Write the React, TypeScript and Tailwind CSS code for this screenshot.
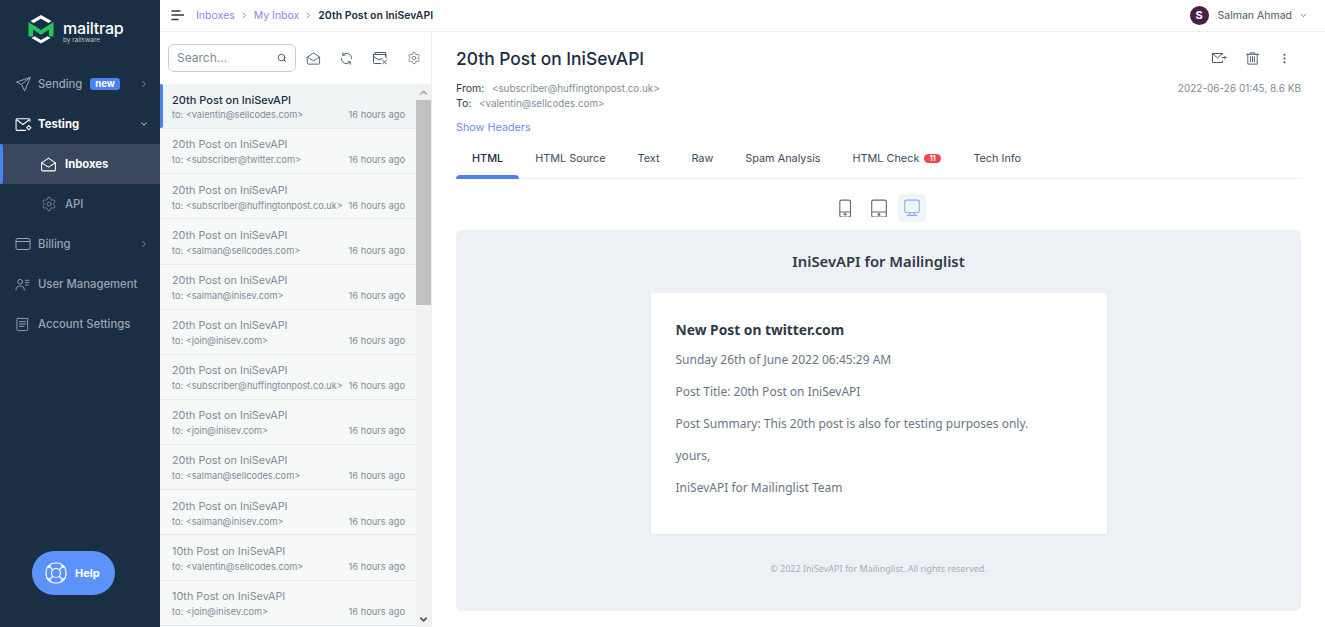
import React from 'react';
import { ChevronRight, ChevronDown, Search, Settings, EllipsisVertical, ChevronUp } from 'lucide-react';

const font = "font-['Inter','Noto_Sans',sans-serif]";

const messages = [
  ['20th Post on IniSevAPI', 'to: <valentin@sellcodes.com>'],
  ['20th Post on IniSevAPI', 'to: <subscriber@twitter.com>'],
  ['20th Post on IniSevAPI', 'to: <subscriber@huffingtonpost.co.uk>'],
  ['20th Post on IniSevAPI', 'to: <salman@sellcodes.com>'],
  ['20th Post on IniSevAPI', 'to: <salman@inisev.com>'],
  ['20th Post on IniSevAPI', 'to: <join@inisev.com>'],
  ['20th Post on IniSevAPI', 'to: <subscriber@huffingtonpost.co.uk>'],
  ['20th Post on IniSevAPI', 'to: <join@inisev.com>'],
  ['20th Post on IniSevAPI', 'to: <salman@sellcodes.com>'],
  ['20th Post on IniSevAPI', 'to: <salman@inisev.com>'],
  ['10th Post on IniSevAPI', 'to: <valentin@sellcodes.com>'],
  ['10th Post on IniSevAPI', 'to: <join@inisev.com>'],
];

const tabs = ['HTML', 'HTML Source', 'Text', 'Raw', 'Spam Analysis', 'HTML Check', 'Tech Info'];

function Logo() {
  return (
    <svg width="26" height="29" viewBox="0 0 26 29" fill="none">
      <path d="M13 0 L23.500 6 L20.500 8 L13 3.700 L5.500 8 L2.500 6 Z" fill="#fff" />
      <path d="M0.500 7 L13 15 L25.500 7 V21.500 L21 21.500 V14.500 L13 19.700 L5 14.500 V21.500 L0.500 21.500 Z" fill="#22c55e" />
      <path d="M3.500 23 L13 28.500 L22.500 23 L19.500 21.300 L13 25 L6.500 21.300 Z" fill="#fff" />
    </svg>
  );
}

function Ico({ children, size = 16, className = '' }: { children: React.ReactNode; size?: number; className?: string }) {
  return (
    <svg width={size} height={size} viewBox="0 0 16 16" fill="none" stroke="currentColor" strokeWidth="1" strokeLinecap="round" strokeLinejoin="round" className={className}>
      {children}
    </svg>
  );
}

const OpenMail = () => (
  <>
    <path d="M1.5 6.5 8 2l6.5 4.5V13a1 1 0 0 1-1 1h-11a1 1 0 0 1-1-1z" />
    <path d="M1.5 6.5 8 10.500l6.500-4" />
  </>
);

function NavItem({ icon, label, bold, arrow, badge }: { icon: React.ReactNode; label: string; bold?: boolean; arrow?: 'right' | 'down'; badge?: boolean }) {
  return (
    <div className={`flex h-10 items-center pl-[15px] pr-[11px] text-[11.300px] ${bold ? 'font-bold text-white' : 'font-medium text-[#9aa5b1]'}`}>
      <span className="flex w-[23px] shrink-0 justify-start">{icon}</span>
      <span>{label}</span>
      {badge && <span className="ml-[8px] rounded-[3px] bg-[#4c82f0] px-[5px] text-[9.500px] font-bold leading-[12px] text-white">new</span>}
      {arrow === 'right' && <ChevronRight size={10} className="ml-auto" />}
      {arrow === 'down' && <ChevronDown size={10} className="ml-auto" />}
    </div>
  );
}

function Sidebar() {
  return (
    <aside className="flex h-[627px] w-[160px] shrink-0 flex-col bg-[#1a2e44]">
      <div className="flex h-[63px] items-start gap-[9px] pl-[28px] pt-[15px]">
        <Logo />
        <div className="flex flex-col pt-[5px] text-white">
          <span className="text-[16px] font-medium leading-[16px] tracking-[-0.2px]">mailtrap</span>
          <span className="text-[6.500px] leading-[8px] text-[#b8c2cc]">by railsware</span>
        </div>
      </div>
      <div className="h-[1px]" />
      <NavItem
        label="Sending"
        badge
        arrow="right"
        icon={<Ico size={16}><path d="M15 1.5 1.5 6l5 2.500L9.500 14.500z" /><path d="M15 1.500 6.500 8.500" /></Ico>}
      />
      <NavItem
        label="Testing"
        bold
        arrow="down"
        icon={<Ico size={17}><path d="M14 5V3.500a1 1 0 0 0-1-1H2a1 1 0 0 0-1 1v9a1 1 0 0 0 1 1h8" /><path d="m1.500 3.500 6 4.500 6-4.500" /><path d="m13 9 2 2-2 2-2-2z" /></Ico>}
      />
      <div className="relative flex h-10 items-center bg-[#3b475e] pl-[40px] text-[11.300px] font-bold text-white">
        <span className="absolute left-0 top-0 h-full w-[3px] rounded-r-[2px] bg-[#4c82f0]" />
        <Ico size={17}><OpenMail /></Ico>
        <span className="ml-[8px]">Inboxes</span>
      </div>
      <div className="flex h-10 items-center pl-[41px] text-[11.300px] font-medium text-[#9aa5b1]">
        <Settings size={16} strokeWidth={1} />
        <span className="ml-[8px]">API</span>
      </div>
      <NavItem
        label="Billing"
        arrow="right"
        icon={<Ico size={16}><rect x="1" y="2.500" width="14" height="11" rx="1.500" /><path d="M1 5.500h14" /></Ico>}
      />
      <NavItem
        label="User Management"
        icon={<Ico size={15}><circle cx="5.500" cy="5" r="2.500" /><path d="M1 14c0-3 2-4.500 4.500-4.500S10 11 10 14" /><path d="M11 3.500h4M11 6h4M11 8.500h3" /></Ico>}
      />
      <NavItem
        label="Account Settings"
        icon={<Ico size={15}><path d="M3 1.500h10.500V13a1.500 1.500 0 0 1-1.500 1.500H3.500A1.500 1.500 0 0 1 2 13V2.500a1 1 0 0 1 1-1z" /><path d="M4.500 5h7M4.500 7.500h7M4.500 10h5" /></Ico>}
      />
      <div className="mt-auto mb-[32px] ml-[32px] flex h-[44px] w-[83px] items-center gap-[7px] rounded-full bg-[#5b93fb] pl-[12px] text-[11px] font-bold text-white">
        <svg width="24" height="24" viewBox="0 0 24 24" fill="none" stroke="currentColor" strokeWidth="1.200">
          <rect x="2" y="2" width="20" height="20" rx="9" />
          <circle cx="12" cy="12" r="4.500" />
          <path d="m5 5 4 4M19 5l-4 4M5 19l4-4M19 19l-4-4M7 3.500l-3.500 3.500M17 3.500 20.500 7M7 20.500 3.500 17M17 20.500l3.500-3.500" />
        </svg>
        Help
      </div>
    </aside>
  );
}

function TopBar() {
  return (
    <header className="flex h-[32px] shrink-0 items-center border-b border-[#eceef0] bg-white pl-[11px] pr-[17px] text-[10.500px]">
      <svg width="13" height="11" viewBox="0 0 13 11" fill="none" stroke="#2b3a4e" strokeWidth="1.400" strokeLinecap="round">
        <path d="M1 1h8M1 5h12M1 9.500h6" />
      </svg>
      <span className="ml-[12px] text-[#8b86ea]">Inboxes</span>
      <ChevronRight size={9} className="mx-[5px] text-[#5d6b7c]" />
      <span className="text-[#8b86ea]">My Inbox</span>
      <ChevronRight size={9} className="mx-[5px] text-[#5d6b7c]" />
      <span className="font-semibold text-[#1a2e44]">20th Post on IniSevAPI</span>
      <div className="ml-auto flex items-center text-[#4b5c70]">
        <span className="flex h-[19px] w-[19px] items-center justify-center rounded-full bg-[#4a1e4b] text-[11px] font-bold text-white">S</span>
        <span className="ml-[9px]">Salman Ahmad</span>
        <ChevronDown size={9} className="ml-[7px]" />
      </div>
    </header>
  );
}

function MessageList() {
  return (
    <section className="flex w-[272px] shrink-0 flex-col border-r border-[#eceef0]">
      <div className="flex h-[52px] shrink-0 items-center pl-[8px] text-[#4b5c70]">
        <div className="flex h-[28px] w-[128px] items-center justify-between rounded-[6px] border border-[#c9ced4] pl-[8px] pr-[8px] text-[12px] text-[#7d8a99]">
          <span>Search...</span>
          <Search size={10} className="text-[#2b3a4e]" />
        </div>
        <span className="ml-[10px] flex"><Ico size={15}><OpenMail /></Ico></span>
        <span className="ml-[18px] flex">
          <Ico size={15}><path d="M13.500 8a5.500 5.500 0 0 0-9.500-3.800M2.500 8A5.500 5.500 0 0 0 12 11.800" /><path d="M4 1.800v2.600h2.600M12 14.200v-2.600H9.400" /></Ico>
        </span>
        <span className="ml-[18px] flex">
          <Ico size={16}><path d="M3 4V2.500h10.500V6M1.500 4.500h12.500V8" /><path d="M8.500 13.500h-6a1 1 0 0 1-1-1v-8" /><path d="m1.500 6.500 5.500 3.500 3-1.500M10.500 10l4 4M14.500 10l-4 4" /></Ico>
        </span>
        <span className="ml-[19px] flex"><Settings size={14} strokeWidth={1.200} /></span>
      </div>
      <div className="flex min-h-0 flex-1">
        <ul className="min-w-0 flex-1 overflow-hidden">
          {messages.map(([title, to], i) => (
            <li
              key={i}
              className={`relative h-[45.150px] border-b border-[#e6e9ec] pl-[12px] pr-[11px] pt-[8.300px] ${i === 0 ? 'bg-[#eff4f5]' : 'bg-[#f6f9f8]'}`}
            >
              {i === 0 && <span className="absolute left-0 top-0 h-full w-[3px] rounded-r-[2px] bg-[#4c82f0]" />}
              <div className={`leading-[16px] ${i === 0 ? 'text-[11px] font-medium text-[#1a2e44]' : 'text-[10.800px] text-[#828c98]'}`}>{title}</div>
              <div className="flex items-center justify-between leading-[14px] text-[#828c98]">
                <span className="whitespace-nowrap text-[9.200px]">{to}</span>
                <span className="whitespace-nowrap text-[9.350px]">16 hours ago</span>
              </div>
            </li>
          ))}
        </ul>
        <div className="flex w-[15px] shrink-0 flex-col bg-[#f1f1f1]">
          <div className="flex h-[16px] items-center justify-center text-[#b0b0b0]"><ChevronUp size={11} strokeWidth={3.500} /></div>
          <div className="h-[205px] bg-[#c1c1c1]" />
          <div className="mt-auto flex h-[16px] items-center justify-center text-[#505050]"><ChevronDown size={11} strokeWidth={3.500} /></div>
        </div>
      </div>
    </section>
  );
}

function MessageHeader() {
  return (
    <div className="pr-[24px]">
      <div className="flex items-start justify-between">
        <h1 className="pt-[14px] text-[17.400px] font-medium leading-[26px] text-[#1a2e44]">20th Post on IniSevAPI</h1>
        <div className="flex items-center gap-[18px] pr-[10px] pt-[18px] text-[#4b5c70]">
          <Ico size={16}><path d="M11.500 4V3.500H1.500v9h10V11" /><path d="m1.500 3.500 5 4.500 5-4.500M11 7.500h4M13.500 6l1.500 1.500L13.500 9" /></Ico>
          <Ico size={15}><path d="M1.500 3.500h13M5.500 3.500V2h5v1.500M3 3.500V14h10V3.500M6 6v5.500M8 6v5.500M10 6v5.500" /></Ico>
          <EllipsisVertical size={13} />
        </div>
      </div>
      <div className="mt-[9px] flex justify-between text-[9.800px] leading-[15px] text-[#828c98]">
        <div>
          <div><span className="mr-[5px] text-[10.500px] text-[#2b3a4e]">From:</span> &lt;subscriber@huffingtonpost.co.uk&gt;</div>
          <div><span className="mr-[5px] text-[10.500px] text-[#2b3a4e]">To:</span> &lt;valentin@sellcodes.com&gt;</div>
        </div>
        <div className="text-[10px]">2022-06-26 01:45, 8.6 KB</div>
      </div>
      <div className="mt-[9px] text-[10.800px] leading-[16px] text-[#6f8bf0]">Show Headers</div>
      <nav className="mt-[5px] flex h-[38px] border-b border-[#eceef0] text-[10.850px] font-normal text-[#3d4c5f]">
        {tabs.map((tab, i) => (
          <div key={tab} className={`relative flex items-center px-[16px] pb-[3px] ${i === 0 ? 'font-medium text-[#1a2e44]' : ''}`}>
            {tab}
            {tab === 'HTML Check' && <span className="ml-[5px] rounded-full bg-[#f0484f] px-[5.500px] text-[7px] font-bold leading-[9px] text-white">11</span>}
            {i === 0 && <span className="absolute bottom-[-1px] left-0 h-[4px] w-full rounded-t-[4px] bg-[#4c82f0]" />}
          </div>
        ))}
      </nav>
    </div>
  );
}

function Preview() {
  return (
    <>
      <div className="mt-[15px] flex justify-center gap-[5px] pr-[24px]">
        <span className="flex h-[28px] w-[28px] items-center justify-center text-[#5d6b7c]">
          <Ico size={18}><rect x="2.500" y="1" width="9.500" height="15" rx="1.500" /><path d="M2.500 11.500H12M6 13.500h2.500M7.200 12.500v2" /></Ico>
        </span>
        <span className="flex h-[28px] w-[28px] items-center justify-center text-[#5d6b7c]">
          <Ico size={18}><rect x="1.500" y="1" width="13" height="15" rx="1.500" /><path d="M1.500 11.500h13" /><circle cx="8" cy="13.700" r=".8" /></Ico>
        </span>
        <span className="flex h-[28px] w-[28px] items-center justify-center rounded-[3px] bg-[#f0f5f6] text-[#8db0f5]">
          <Ico size={18}><rect x="1.500" y="1" width="13" height="11" rx="1.500" /><path d="M6 12v2M10 12v2M3.500 14.500h9" /></Ico>
        </span>
      </div>
      <div className="mb-[16px] mr-[24px] mt-[8px] flex flex-1 flex-col items-center rounded-[6px] bg-[#edf1f5] pt-[22px] font-['Noto_Sans','Open_Sans',sans-serif]">
        <h2 className="text-[14.800px] font-semibold leading-[18px] text-[#2f3a47]">IniSevAPI for Mailinglist</h2>
        <div className="mt-[23px] h-[241px] w-[456px] rounded-[2px] bg-white px-[25px] pt-[27px] text-[12px] leading-[16px] text-[#6b7685] shadow-[0_1px_3px_rgba(0,0,0,0.05)]">
          <h3 className="text-[13.800px] font-bold leading-[20px] text-[#2f3a47]">New Post on twitter.com</h3>
          <p className="mt-[12px]">Sunday 26th of June 2022 06:45:29 AM</p>
          <p className="mt-[16px]">Post Title: 20th Post on IniSevAPI</p>
          <p className="mt-[16px]">Post Summary: This 20th post is also for testing purposes only.</p>
          <p className="mt-[16px]">yours,</p>
          <p className="mt-[16px]">IniSevAPI for Mailinglist Team</p>
        </div>
        <p className="mt-[28px] text-[9px] text-[#a5aeb8]">© 2022 IniSevAPI for Mailinglist. All rights reserved.</p>
      </div>
    </>
  );
}

export default function App() {
  return (
    <div className={`flex h-[627px] w-[1325px] overflow-hidden bg-white ${font}`}>
      <Sidebar />
      <div className="flex min-w-0 flex-1 flex-col">
        <TopBar />
        <div className="flex min-h-0 flex-1">
          <MessageList />
          <main className="flex min-w-0 flex-1 flex-col pl-[24px]">
            <MessageHeader />
            <Preview />
          </main>
        </div>
      </div>
    </div>
  );
}
